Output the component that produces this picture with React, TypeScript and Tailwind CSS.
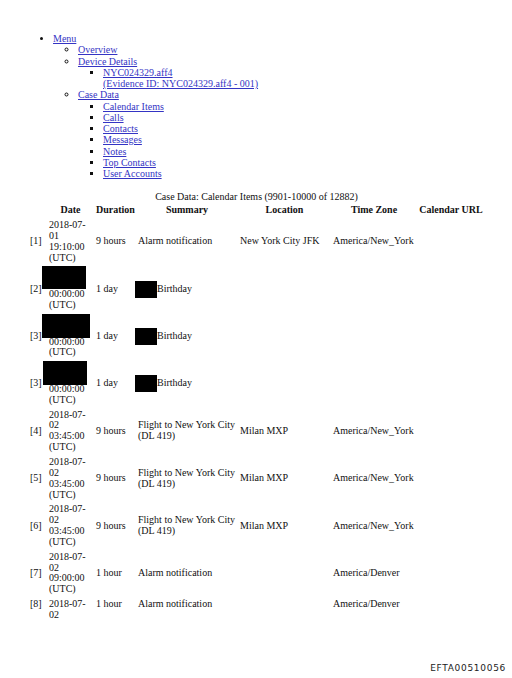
import React from "react";

type Row = {
  idx: string;
  date: string[];
  duration: string;
  summary: string[];
  location?: string;
  tz?: string;
  redactDate?: string;
  redactSummary?: boolean;
  top?: boolean;
};

const rows: Row[] = [
  {
    idx: "[1]",
    date: ["2018-07-", "01", "19:10:00", "(UTC)"],
    duration: "9 hours",
    summary: ["Alarm notification"],
    location: "New York City JFK",
    tz: "America/New_York",
  },
  {
    idx: "[2]",
    date: ["2018-07-", "02", "00:00:00", "(UTC)"],
    duration: "1 day",
    summary: ["Birthday"],
    redactDate: "w-[44px] h-[23px] -left-[7px] -top-[1px]",
    redactSummary: true,
  },
  {
    idx: "[3]",
    date: ["2018-07-", "02", "00:00:00", "(UTC)"],
    duration: "1 day",
    summary: ["Birthday"],
    redactDate: "w-[48px] h-[24px] -left-[7px] -top-[1px]",
    redactSummary: true,
  },
  {
    idx: "[3]",
    date: ["2018-07-", "02", "00:00:00", "(UTC)"],
    duration: "1 day",
    summary: ["Birthday"],
    redactDate: "w-[44px] h-[24px] -left-[6px] -top-[1px]",
    redactSummary: true,
  },
  {
    idx: "[4]",
    date: ["2018-07-", "02", "03:45:00", "(UTC)"],
    duration: "9 hours",
    summary: ["Flight to New York City", "(DL 419)"],
    location: "Milan MXP",
    tz: "America/New_York",
  },
  {
    idx: "[5]",
    date: ["2018-07-", "02", "03:45:00", "(UTC)"],
    duration: "9 hours",
    summary: ["Flight to New York City", "(DL 419)"],
    location: "Milan MXP",
    tz: "America/New_York",
  },
  {
    idx: "[6]",
    date: ["2018-07-", "02", "03:45:00", "(UTC)"],
    duration: "9 hours",
    summary: ["Flight to New York City", "(DL 419)"],
    location: "Milan MXP",
    tz: "America/New_York",
  },
  {
    idx: "[7]",
    date: ["2018-07-", "02", "09:00:00", "(UTC)"],
    duration: "1 hour",
    summary: ["Alarm notification"],
    tz: "America/Denver",
  },
  {
    idx: "[8]",
    date: ["2018-07-", "02"],
    duration: "1 hour",
    summary: ["Alarm notification"],
    tz: "America/Denver",
    top: true,
  },
];

function A({ children }: { children: React.ReactNode }) {
  return (
    <a href="#" className="text-[#3434c4] underline">
      {children}
    </a>
  );
}

export default function App() {
  return (
    <div className="w-[512px] h-[678px] bg-white text-[#111] flex flex-col font-['Liberation_Serif','Times_New_Roman',serif] text-[10px] leading-[11.25px]">
      <ul className="mt-[33px] mb-[12px] pl-[53px] list-disc">
        <li>
          <A>Menu</A>
          <ul className="pl-[25px] list-[circle]">
            <li>
              <A>Overview</A>
            </li>
            <li>
              <A>Device Details</A>
              <ul className="pl-[25px] list-[square]">
                <li>
                  <A>NYC024329.aff4</A>
                  <br />
                  <A>(Evidence ID: NYC024329.aff4 - 001)</A>
                </li>
              </ul>
            </li>
            <li>
              <A>Case Data</A>
              <ul className="pl-[25px] list-[square]">
                <li><A>Calendar Items</A></li>
                <li><A>Calls</A></li>
                <li><A>Contacts</A></li>
                <li><A>Messages</A></li>
                <li><A>Notes</A></li>
                <li><A>Top Contacts</A></li>
                <li><A>User Accounts</A></li>
              </ul>
            </li>
          </ul>
        </li>
      </ul>

      <table className="ml-[27px] w-[459px] table-fixed border-separate border-spacing-[2px] leading-[10.85px]">
        <caption className="text-center leading-[11px]">
          Case Data: Calendar Items (9901-10000 of 12882)
        </caption>
        <colgroup>
          <col className="w-[17px]" />
          <col className="w-[45px]" />
          <col className="w-[40px]" />
          <col className="w-[100px]" />
          <col className="w-[91px]" />
          <col className="w-[84px]" />
          <col className="w-[66px]" />
        </colgroup>
        <thead>
          <tr className="font-bold">
            <th className="p-px"></th>
            <th className="p-px text-center">Date</th>
            <th className="p-px text-center">Duration</th>
            <th className="p-px text-center">Summary</th>
            <th className="p-px text-center">Location</th>
            <th className="p-px text-center">Time Zone</th>
            <th className="p-px text-center whitespace-nowrap">Calendar URL</th>
          </tr>
        </thead>
        <tbody>
          {rows.map((r, i) => {
            const va = r.top ? "align-top" : "align-middle";
            return (
              <tr key={i}>
                <td className={`p-px ${va}`}>{r.idx}</td>
                <td className={`p-px ${va}`}>
                  <div className="relative">
                    {r.date.map((l, j) => (
                      <div key={j}>{l}</div>
                    ))}
                    {r.redactDate && (
                      <div className={`absolute bg-black ${r.redactDate}`} />
                    )}
                  </div>
                </td>
                <td className={`p-px whitespace-nowrap ${va}`}>{r.duration}</td>
                <td className={`p-px ${va}`}>
                  {r.redactSummary ? (
                    <div className="flex items-center">
                      <span className="inline-block w-[22px] h-[17px] -ml-[3px] bg-black" />
                      <span>Birthday</span>
                    </div>
                  ) : (
                    r.summary.map((l, j) => (
                      <div key={j} className="whitespace-nowrap">
                        {l}
                      </div>
                    ))
                  )}
                </td>
                <td className={`p-px whitespace-nowrap ${va}`}>{r.location}</td>
                <td className={`p-px whitespace-nowrap ${va}`}>{r.tz}</td>
                <td className={`p-px ${va}`}></td>
              </tr>
            );
          })}
        </tbody>
      </table>

      <div className="mt-auto mb-[4px] mr-[6px] self-end font-['DejaVu_Sans',sans-serif] text-[9px] leading-[12px] tracking-[0.7px] text-[#222]">
        EFTA00510056
      </div>
    </div>
  );
}
